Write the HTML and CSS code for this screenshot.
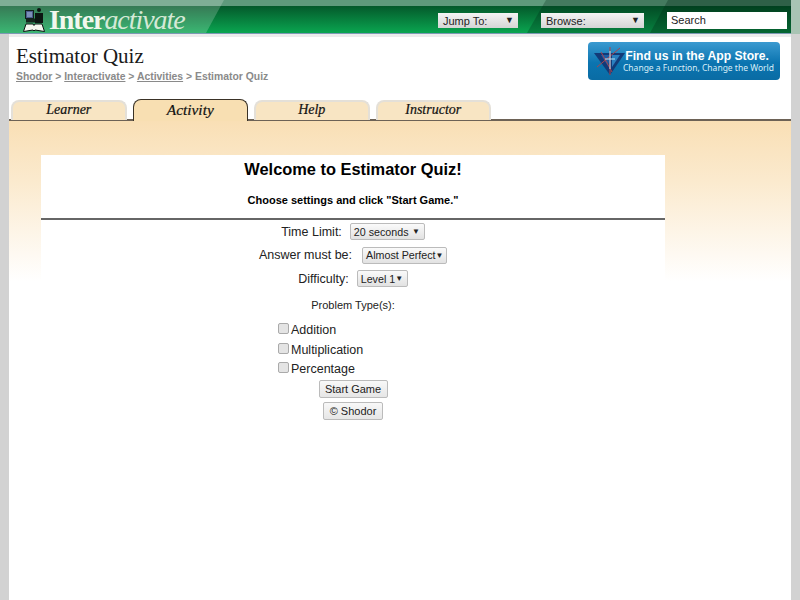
FILE: index.html
```html
<!DOCTYPE html>
<html lang="en">
<head>
<meta charset="utf-8">
<title>Estimator Quiz</title>
<link rel="stylesheet" href="styles.css">
</head>
<body>
<header class="topbar">
  <div class="shade"></div>
  <div class="logo">
    <svg class="logo-icon" width="22" height="24" viewBox="0 0 22 24">
      <rect x="2.5" y="2.5" width="8" height="8" fill="#4a5c8c" stroke="#10201a"/>
      <path d="M4 4h5v5H4z" fill="#7d8fb8"/>
      <rect x="14" y="0" width="4" height="4" rx="2" fill="#0c1512"/>
      <path d="M12 5h8v10h-8z" fill="#0c1512"/>
      <rect x="3" y="10.500" width="9" height="4" fill="#14241c"/>
      <path d="M.5 23.500 3 16h7l1 1.500 1-1.500h7l2.500 7.500-9.500-1.500-1 1-1-1z" fill="#f4f7ef" stroke="#0c1512"/>
    </svg>
    <span class="logo-text"><b>Inter</b><i>activate</i></span>
  </div>
  <div class="top-controls">
    <div class="fake-select jump"><span>Jump To:</span><span class="arrow">▼</span></div>
    <div class="fake-select browse"><span>Browse:</span><span class="arrow">▼</span></div>
    <div class="search">Search</div>
  </div>
  <div class="gutter-right"></div>
</header>
<div class="page">
  <div class="title-row">
    <div>
      <h1>Estimator Quiz</h1>
      <nav class="crumbs"><a href="#">Shodor</a> &gt; <a href="#">Interactivate</a> &gt; <a href="#">Activities</a> &gt; Estimator Quiz</nav>
    </div>
    <a class="appstore" href="#">
      <svg class="app-icon" width="32" height="30" viewBox="0 0 32 30">
        <path d="M0 7h31L16 29z" fill="#123a78"/>
        <path d="M7 9h10l-3 11z" fill="#1c5ea6"/>
        <path d="M18 9h8l-8 12z" fill="#2a7fc0"/>
        <path d="M16 1v28M3 21 26 2M7 6l11 20" stroke="#a8444f" stroke-width="1" fill="none"/>
        <path d="M11 13h10M16 5v18" stroke="#bfe4f5" stroke-width="1"/>
      </svg>
      <span class="app-text"><span class="app-main">Find us in the App Store.</span><span class="app-sub">Change a Function, Change the World</span></span>
    </a>
  </div>
  <div class="tabs">
    <a class="tab" href="#">Learner</a>
    <a class="tab active" href="#">Activity</a>
    <a class="tab" href="#">Help</a>
    <a class="tab" href="#">Instructor</a>
  </div>
  <main class="stage">
    <section class="panel">
      <div class="panel-head">
        <h2>Welcome to Estimator Quiz!</h2>
        <p>Choose settings and click "Start Game."</p>
      </div>
      <form class="form">
        <div class="row"><label>Time Limit:</label><div class="select s-time"><span>20 seconds</span><span class="arrow">▼</span></div></div>
        <div class="row"><label>Answer must be:</label><div class="select s-answer"><span>Almost Perfect</span><span class="arrow">▼</span></div></div>
        <div class="row"><label>Difficulty:</label><div class="select s-diff"><span>Level 1</span><span class="arrow">▼</span></div></div>
        <div class="types-label">Problem Type(s):</div>
        <div class="checks">
          <label class="check"><span class="box"></span>Addition</label>
          <label class="check"><span class="box"></span>Multiplication</label>
          <label class="check"><span class="box"></span>Percentage</label>
        </div>
        <div class="btn start">Start Game</div>
        <div class="btn shodor">© Shodor</div>
      </form>
    </section>
  </main>
</div>
</body>
</html>
```
FILE: styles.css
```css
html, body { margin: 0; padding: 0; height: 100%; }
body {
  background: #fff;
  font-family: "Liberation Sans", Arial, sans-serif;
  color: #111;
  overflow: hidden;
}
.topbar {
  position: relative;
  height: 34px;
  box-sizing: border-box;
  padding: 5px 0 0 23px;
  display: flex;
  justify-content: space-between;
  border-bottom: 1px solid #7d98b4;
  background: linear-gradient(#5f9a7c 0, #5f9a7c 6px, #04592b 6px, #0aa550 33px);
}
.topbar::before {
  content: "";
  position: absolute;
  inset: 0;
  background: rgba(255,255,255,.2);
  clip-path: polygon(0 0, 224px 0, 206px 100%, 0 100%);
}
.topbar::after {
  content: "";
  position: absolute;
  inset: 0;
  background: rgba(0,40,20,.28);
  clip-path: polygon(546px 0, 100% 0, 100% 100%, 527px 100%);
}
.shade {
  position: absolute;
  inset: 0;
  background: rgba(0,40,20,.3);
  clip-path: polygon(668px 0, 100% 0, 100% 100%, 650px 100%);
}
.gutter-right {
  position: absolute;
  top: 0;
  right: 0;
  bottom: -1px;
  width: 9px;
  background: #a9c4b4;
  z-index: 2;
}
.logo, .top-controls { position: relative; z-index: 1; }
.logo { display: flex; align-items: flex-start; }
.logo-icon { margin-top: 3px; margin-right: 4px; }
.logo-text {
  font-family: "Liberation Serif", serif;
  font-size: 28px;
  letter-spacing: -1.050px;
  line-height: 30px;
  color: #f2f7ee;
  white-space: nowrap;
}
.logo-text b { font-weight: bold; }
.logo-text i { font-weight: normal; color: #d5e9d6; }
.top-controls {
  display: flex;
  gap: 23px;
  padding: 8px 13px 0 0;
  align-items: flex-start;
  font-size: 11px;
}
.fake-select {
  height: 15px;
  line-height: 16px;
  display: flex;
  justify-content: space-between;
  padding: 0 4px 0 5px;
  background: linear-gradient(#f4f4f4, #d5d5d5);
  color: #222;
}
.fake-select .arrow { font-size: 9px; line-height: 14px; }
.jump { width: 71px; }
.browse { width: 94px; }
.search {
  width: 116px;
  height: 17px;
  line-height: 17px;
  padding: 0 0 0 4px;
  background: #fff;
  color: #222;
  margin-top: -1px;
}
.page {
  border-left: 9px solid #d2d2d2;
  border-right: 9px solid #d2d2d2;
  height: 566px;
  box-sizing: border-box;
  background: #fff;
}
.title-row {
  height: 64px;
  box-sizing: border-box;
  padding: 5px 11px 0 7px;
  border-top: 3px solid #ececec;
  display: flex;
  justify-content: space-between;
  align-items: flex-start;
}
h1 {
  margin: 2px 0 0;
  font: normal 21px/24px "Liberation Serif", serif;
  color: #1a1a1a;
}
.crumbs {
  margin-top: 2px;
  font-size: 10.400px;
  font-weight: bold;
  line-height: 14px;
  color: #8a8a8a;
}
.crumbs a { color: #8a8a8a; }
.appstore {
  width: 192px;
  height: 38px;
  box-sizing: border-box;
  display: flex;
  align-items: center;
  padding: 0 6px 0 6px;
  border-radius: 4px;
  background: linear-gradient(#3b9ad0, #0b74b0 55%, #0a6ca4);
  color: #fff;
  text-decoration: none;
}
.app-icon { flex: none; }
.app-text { display: flex; flex-direction: column; align-items: flex-end; margin-left: -6px; flex: 1; }
.app-main { font-size: 12.200px; font-weight: bold; line-height: 12px; padding-right: 5px; white-space: nowrap; }
.app-sub { font: 8.500px/11px "Noto Sans", sans-serif; color: #d8eef8; white-space: nowrap; }
.tabs {
  display: flex;
  gap: 6px;
  height: 21px;
  box-sizing: border-box;
  padding: 0 0 0 2px;
  align-items: flex-end;
}
.tab {
  width: 115.500px;
  height: 20px;
  box-sizing: border-box;
  margin-bottom: -1px;
  background: #f8e5c3;
  border: 2px solid #e4e0d8;
  border-bottom: 0;
  border-radius: 8px 8px 0 0;
  text-align: center;
  font: italic 14px/15px "Liberation Serif", serif;
  -webkit-text-stroke: .2px #111;
  color: #111;
  text-decoration: none;
}
.active {
  position: relative;
  height: 22px;
  margin-bottom: -2px;
  background: #f8dfb2;
  border: 1px solid #3a3226;
  border-bottom: 0;
  line-height: 19px;
  font-size: 15.400px;
  z-index: 1;
}
.stage {
  border-top: 2px solid #6d6256;
  height: 481px;
  box-sizing: border-box;
  padding: 34px 0 0 32px;
  background: linear-gradient(#f9dfb5 0, #fbeace 60px, #fff 160px);
}
.panel {
  width: 624px;
  height: 445px;
  background: #fff;
}
.panel-head {
  height: 65px;
  box-sizing: border-box;
  border-bottom: 2px solid #666;
  text-align: center;
}
h2 { margin: 0; font-size: 16.400px; line-height: 28px; color: #000; }
.panel-head p { margin: 10px 0 0; font-size: 11px; font-weight: bold; line-height: 14px; color: #000; }
.form { display: flex; flex-direction: column; align-items: center; font-size: 12.500px; color: #222; }
.row { display: flex; align-items: center; height: 23.500px; white-space: nowrap; }
.select {
  box-sizing: border-box;
  height: 17px;
  display: flex;
  justify-content: space-between;
  align-items: center;
  padding: 0 4px 0 3px;
  border: 1px solid #bbb;
  border-radius: 2px;
  background: linear-gradient(#fafafa, #e2e2e2);
  font-size: 10.700px;
  color: #222;
}
.select .arrow { font-size: 8px; }
.s-time { width: 75px; margin-left: 8px; }
.s-answer { width: 85px; margin-left: 10px; }
.s-diff { width: 51px; margin-left: 8px; }
.types-label { margin-top: 7px; font-size: 11px; line-height: 14px; }
.checks {
  align-self: flex-start;
  margin: 9px 0 0 237px;
  display: flex;
  flex-direction: column;
}
.check { display: flex; align-items: center; height: 19.500px; font-size: 12.500px; }
.box {
  width: 9px;
  height: 9px;
  margin-right: 2px;
  margin-top: -3px;
  border: 1px solid #aaa;
  border-radius: 2px;
  background: #e4e4e4;
}
.btn {
  box-sizing: border-box;
  height: 18px;
  line-height: 16px;
  text-align: center;
  font-size: 11px;
  border: 1px solid #bbb;
  border-radius: 2px;
  background: linear-gradient(#f8f8f8, #e6e6e6);
  color: #222;
}
.start { width: 69px; margin-top: 1px; }
.shodor { width: 60px; margin-top: 4px; }
```
